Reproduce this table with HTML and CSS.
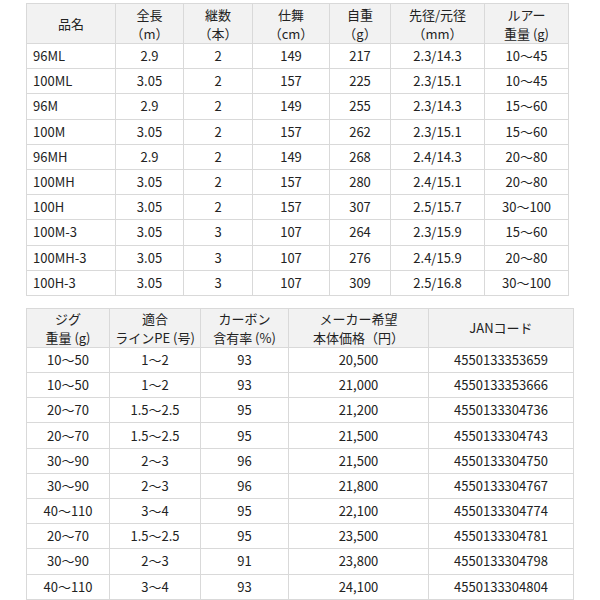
FILE: index.html
```html
<!DOCTYPE html>
<html lang="ja">
<head>
<meta charset="utf-8">
<link rel="stylesheet" href="styles.css">
</head>
<body>
<div class="wrap">
<table class="spec spec-top">
<colgroup><col class="c89"><col class="c68"><col class="c69"><col class="c77"><col class="c61"><col class="c94"><col class="c84"></colgroup>
<thead>
<tr><th>品名</th><th>全長<br>（m）</th><th>継数<br>（本）</th><th>仕舞<br>（cm）</th><th>自重<br>（g）</th><th>先径/元径<br>（mm）</th><th>ルアー<br>重量 (g)</th></tr>
</thead>
<tbody>
<tr><td class="name">96ML</td><td>2.9</td><td>2</td><td>149</td><td>217</td><td>2.3/14.3</td><td>10～45</td></tr>
<tr><td class="name">100ML</td><td>3.05</td><td>2</td><td>157</td><td>225</td><td>2.3/15.1</td><td>10～45</td></tr>
<tr><td class="name">96M</td><td>2.9</td><td>2</td><td>149</td><td>255</td><td>2.3/14.3</td><td>15～60</td></tr>
<tr><td class="name">100M</td><td>3.05</td><td>2</td><td>157</td><td>262</td><td>2.3/15.1</td><td>15～60</td></tr>
<tr><td class="name">96MH</td><td>2.9</td><td>2</td><td>149</td><td>268</td><td>2.4/14.3</td><td>20～80</td></tr>
<tr><td class="name">100MH</td><td>3.05</td><td>2</td><td>157</td><td>280</td><td>2.4/15.1</td><td>20～80</td></tr>
<tr><td class="name">100H</td><td>3.05</td><td>2</td><td>157</td><td>307</td><td>2.5/15.7</td><td>30～100</td></tr>
<tr><td class="name">100M-3</td><td>3.05</td><td>3</td><td>107</td><td>264</td><td>2.3/15.9</td><td>15～60</td></tr>
<tr><td class="name">100MH-3</td><td>3.05</td><td>3</td><td>107</td><td>276</td><td>2.4/15.9</td><td>20～80</td></tr>
<tr><td class="name">100H-3</td><td>3.05</td><td>3</td><td>107</td><td>309</td><td>2.5/16.8</td><td>30～100</td></tr>
</tbody>
</table>
<table class="spec spec-bottom">
<colgroup><col class="c83"><col class="c91"><col class="c88"><col class="c140"><col class="c145"></colgroup>
<thead>
<tr><th>ジグ<br>重量 (g)</th><th>適合<br>ラインPE (号)</th><th>カーボン<br>含有率 (%)</th><th>メーカー希望<br>本体価格（円）</th><th>JANコード</th></tr>
</thead>
<tbody>
<tr><td>10～50</td><td>1～2</td><td>93</td><td>20,500</td><td>4550133353659</td></tr>
<tr><td>10～50</td><td>1～2</td><td>93</td><td>21,000</td><td>4550133353666</td></tr>
<tr><td>20～70</td><td>1.5～2.5</td><td>95</td><td>21,200</td><td>4550133304736</td></tr>
<tr><td>20～70</td><td>1.5～2.5</td><td>95</td><td>21,500</td><td>4550133304743</td></tr>
<tr><td>30～90</td><td>2～3</td><td>96</td><td>21,500</td><td>4550133304750</td></tr>
<tr><td>30～90</td><td>2～3</td><td>96</td><td>21,800</td><td>4550133304767</td></tr>
<tr><td>40～110</td><td>3～4</td><td>95</td><td>22,100</td><td>4550133304774</td></tr>
<tr><td>20～70</td><td>1.5～2.5</td><td>95</td><td>23,500</td><td>4550133304781</td></tr>
<tr><td>30～90</td><td>2～3</td><td>91</td><td>23,800</td><td>4550133304798</td></tr>
<tr><td>40～110</td><td>3～4</td><td>93</td><td>24,100</td><td>4550133304804</td></tr>
</tbody>
</table>
</div>
</body>
</html>
```
FILE: styles.css
```css
html, body {
  margin: 0;
  padding: 0;
  background: #ffffff;
}
body {
  font-family: "Noto Sans CJK JP", "Noto Sans", sans-serif;
  font-size: 13px;
  color: #222222;
  text-spacing-trim: space-all;
}
.wrap {
  display: flex;
  flex-direction: column;
  align-items: flex-start;
  gap: 12px;
  padding: 3px 0 0 26px;
}
.spec {
  border-collapse: collapse;
  table-layout: fixed;
}
.spec-top { width: 542px; }
.spec-bottom { width: 547px; }
.spec th, .spec td {
  border: 1px solid #d9d9d9;
  text-align: center;
  vertical-align: middle;
  padding: 0 4px;
  white-space: nowrap;
  line-height: 19px;
}
.spec th {
  background: #f2f2f2;
  font-weight: normal;
}
.spec-top thead tr { height: 40px; }
.spec-bottom thead tr { height: 38px; }
.spec tbody tr { height: 25.2px; }
.spec td { line-height: 16px; }
.spec td.name {
  text-align: left;
  padding-left: 6px;
}
.c89 { width: 89px; }
.c68 { width: 68px; }
.c69 { width: 69px; }
.c77 { width: 77px; }
.c61 { width: 61px; }
.c94 { width: 94px; }
.c84 { width: 84px; }
.c83 { width: 83px; }
.c91 { width: 91px; }
.c88 { width: 88px; }
.c140 { width: 140px; }
.c145 { width: 145px; }
```
